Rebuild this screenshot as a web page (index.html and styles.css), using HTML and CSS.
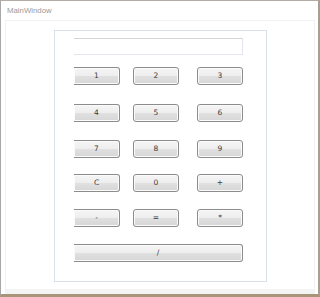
FILE: index.html
```html
<html>
    <head>
        <meta charset="UTF-8">
        <link rel="stylesheet" href="styles.css">
    </head>
    <body>
        <div class="window">
            <div class="titlebar">MainWindow</div>
            <div class="client">
                <div class="panel">
                    <input type="text" class="display cut" />
                    <div class="keys">
                        <button class="key cut">1</button>
                        <button class="key">2</button>
                        <button class="key">3</button>
                        <button class="key cut">4</button>
                        <button class="key">5</button>
                        <button class="key">6</button>
                        <button class="key cut">7</button>
                        <button class="key">8</button>
                        <button class="key">9</button>
                        <button class="key cut">C</button>
                        <button class="key">0</button>
                        <button class="key">+</button>
                        <button class="key cut">-</button>
                        <button class="key">=</button>
                        <button class="key">*</button>
                        <button class="key wide cut">/</button>
                    </div>
                </div>
            </div>
            <div class="statusband"></div>
        </div>
    </body>
</html>
```

FILE: styles.css
```css
body {
    margin: 0;
    background: #fff;
    font-family: "DejaVu Sans", sans-serif;
}

.window {
    width: 320px;
    height: 297px;
    box-sizing: border-box;
    border-top: 1px solid #b4aca2;
    border-left: 1px solid #a8a8a8;
    border-right: 2px solid #a89f94;
    border-bottom: 3px solid #a89479;
    display: flex;
    flex-direction: column;
    background: #fff;
}

.titlebar {
    height: 19px;
    padding-left: 6px;
    font-family: "Liberation Sans", sans-serif;
    font-size: 7.8px;
    line-height: 19px;
    color: #9a9a9a;
}

.client {
    flex: 1;
    margin: 0 3px 0 4px;
    border: 1px solid #f2f2f2;
    border-bottom: none;
    background: #fff;
}

.panel {
    margin: 9px 0 0 48px;
    width: 213px;
    height: 252px;
    box-sizing: border-box;
    border: 1px solid #d9e0e8;
    padding: 7px 0 0 19px;
}

.display {
    display: block;
    width: 169px;
    height: 17px;
    box-sizing: border-box;
    margin: 0;
    border: 1px solid #e3e6ea;
    border-top-color: #d2d4d8;
    background: #fff;
    outline: none;
}

.keys {
    margin-top: 12px;
    display: grid;
    grid-template-columns: 59px 64px 46px;
    grid-template-rows: 37px 36px 34px 35px 35px 18px;
}

.key {
    width: 46px;
    height: 18px;
    box-sizing: border-box;
    margin: 0;
    padding: 0;
    border: 1px solid #8c8c8c;
    border-radius: 3px;
    background: linear-gradient(#f5f5f5 0%, #eeeeee 48%, #e0e0e0 52%, #d6d6d6 100%);
    box-shadow: inset 0 0 0 1px #fbfbfb;
    font-family: "DejaVu Sans", sans-serif;
    font-size: 7.5px;
    color: #3c3c3c;
    line-height: 16px;
    text-align: center;
}

.key.wide {
    grid-column: 1 / 4;
    width: 169px;
}

.cut {
    border-left: none;
    border-top-left-radius: 0;
    border-bottom-left-radius: 0;
}

.statusband {
    height: 5px;
    margin: 0 3px 0 4px;
    background: #f3f3f3;
}
```
